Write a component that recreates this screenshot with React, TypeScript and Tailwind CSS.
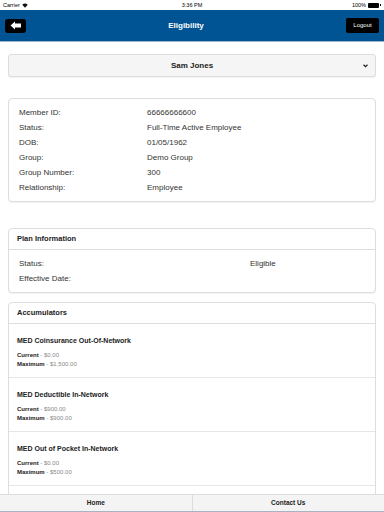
import React from 'react'

const member = [
    ['Member ID:', '66666666600'],
    ['Status:', 'Full-Time Active Employee'],
    ['DOB:', '01/05/1962'],
    ['Group:', 'Demo Group'],
    ['Group Number:', '300'],
    ['Relationship:', 'Employee'],
]

const accumulators = [
    { name: 'MED Coinsurance Out-Of-Network', current: '$0.00', max: '$1,500.00' },
    { name: 'MED Deductible In-Network', current: '$900.00', max: '$900.00' },
    { name: 'MED Out of Pocket In-Network', current: '$0.00', max: '$500.00' },
]

function StatusBar(): JSX.Element {
    return (
        <div className="h-[10px] flex items-center justify-between px-[3px] text-[5.5px] text-black bg-white">
            <span className="flex items-center gap-[2px] w-[60px]">
                Carrier
                <svg width="6" height="5" viewBox="0 0 12 10">
                    <path d="M6 9.5 L0.5 3.5 A8 8 0 0 1 11.5 3.5 Z" fill="#111" />
                </svg>
            </span>
            <span>3:36 PM</span>
            <span className="flex items-center justify-end gap-[2px] w-[60px]">
                100%
                <span className="w-[11px] h-[5px] bg-black rounded-[1px]" />
                <span className="w-[1px] h-[2px] bg-black -ml-[1px]" />
            </span>
        </div>
    )
}

function Header(): JSX.Element {
    return (
        <div className="h-[32px] bg-[#005494] border-b-[1.5px] border-[#9fb5cc] flex items-center justify-between px-[5px]">
            <button className="w-[21px] h-[14px] bg-black rounded-[3px] flex items-center justify-center">
                <svg width="12" height="9" viewBox="0 0 12 9">
                    <path d="M0.5 4.5 L5 0.5 L5 2.5 L11 2.5 L11 6.5 L5 6.5 L5 8.5 Z" fill="#fff" />
                </svg>
            </button>
            <span className="text-white font-bold text-[8px]">Eligibility</span>
            <button className="w-[33px] h-[15px] bg-black rounded-[2px] text-white text-[6px] flex items-center justify-center">
                Logout
            </button>
        </div>
    )
}

function Card({ title, children }: { title?: string; children: React.ReactNode }): JSX.Element {
    return (
        <div className="mx-[8px] border border-[#dddddd] rounded-[4px] bg-white shadow-[0_1px_1px_rgba(0,0,0,0.05)]">
            {title && (
                <div className="h-[21px] px-[8px] flex items-center border-b border-[#dddddd] text-[7.5px] font-bold text-[#222]">
                    {title}
                </div>
            )}
            {children}
        </div>
    )
}

export default function App(): JSX.Element {
    return (
        <div className="w-[384px] h-[512px] flex flex-col bg-white overflow-hidden font-['Liberation_Sans',Arial,sans-serif] text-[#333]">
            <StatusBar />
            <Header />
            <div className="flex-1 overflow-hidden">
                <div className="mx-[8px] mt-[12px] h-[23px] bg-[#f5f5f5] border border-[#dddddd] rounded-[3px] shadow-[0_1px_1px_rgba(0,0,0,0.06)] flex items-center relative">
                    <span className="flex-1 text-center text-[8px] font-bold text-[#222]">Sam Jones</span>
                    <svg className="absolute right-[7px]" width="5" height="4" viewBox="0 0 10 7">
                        <path d="M1 1 L5 5 L9 1" stroke="#222" strokeWidth="2.4" fill="none" />
                    </svg>
                </div>

                <div className="mt-[21px]">
                    <Card>
                        <div className="py-[6px] px-[10px]">
                            {member.map(([k, v]) => (
                                <div key={k} className="h-[15px] flex items-center text-[8px]">
                                    <span className="w-[128px]">{k}</span>
                                    <span>{v}</span>
                                </div>
                            ))}
                        </div>
                    </Card>
                </div>

                <div className="mt-[26px]">
                    <Card title="Plan Information">
                        <div className="pt-[6px] pb-[6px] px-[10px]">
                            <div className="h-[15px] flex items-center text-[8px]">
                                <span className="w-[231px]">Status:</span>
                                <span>Eligible</span>
                            </div>
                            <div className="h-[15px] flex items-center text-[8px]">
                                <span>Effective Date:</span>
                            </div>
                        </div>
                    </Card>
                </div>

                <div className="mt-[9px]">
                    <Card title="Accumulators">
                        {accumulators.map((a) => (
                            <div key={a.name} className="h-[54px] px-[8px] pt-[13px] border-b border-[#e6e6e6]">
                                <div className="text-[7px] font-bold text-[#222] leading-[8px]">{a.name}</div>
                                <div className="mt-[6px] text-[6px] leading-[9px] text-[#888]">
                                    <div>
                                        <span className="font-bold text-[#222]">Current</span> - {a.current}
                                    </div>
                                    <div>
                                        <span className="font-bold text-[#222]">Maximum</span> - {a.max}
                                    </div>
                                </div>
                            </div>
                        ))}
                        <div className="h-[30px]" />
                    </Card>
                </div>
            </div>
            <div className="h-[18px] flex bg-[#f4f4f4] border-t border-[#dddddd] border-b-[1.5px] border-b-[#a8b4c2] text-[6.5px] font-bold text-[#222]">
                <div className="flex-1 flex items-center justify-center border-r border-[#dddddd]">Home</div>
                <div className="flex-1 flex items-center justify-center">Contact Us</div>
            </div>
        </div>
    )
}
